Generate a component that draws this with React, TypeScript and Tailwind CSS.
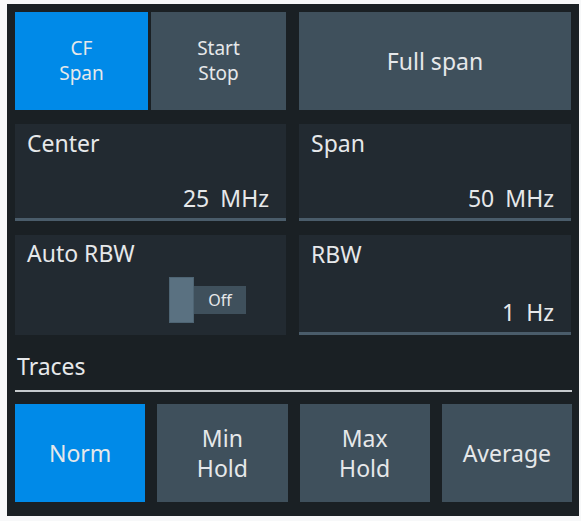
import React from "react";

const font = { fontFamily: '"Noto Sans", "Open Sans", sans-serif' };

function Field({ label, value, unit, children }: { label: string; value?: string; unit?: string; children?: React.ReactNode }) {
  return (
    <div className="bg-[#222a31] border-b-[3px] border-[#4a5c6a] flex flex-col justify-between pl-[12px] pr-[17px] pt-[4px] pb-[5px]">
      <div className="text-[23px] leading-[30px] text-[#e6e8ea]">{label}</div>
      {children}
      {value !== undefined && (
        <div className="flex justify-end gap-[11px] text-[23px] leading-[30px] text-[#e6e8ea]">
          <span>{value}</span>
          <span>{unit}</span>
        </div>
      )}
    </div>
  );
}

function Btn({ active, lines, small }: { active?: boolean; lines: string[]; small?: boolean }) {
  return (
    <div
      className={`${active ? "bg-[#008ae8]" : "bg-[#3f505c]"} flex flex-col items-center justify-center text-[#e6e8ea] ${
        small ? "text-[19px] leading-[25px]" : "text-[23px] leading-[30px]"
      }`}
    >
      {lines.map((l) => (
        <span key={l}>{l}</span>
      ))}
    </div>
  );
}

export default function App() {
  return (
    <div className="w-[581px] h-[521px] bg-[#f7f8f9] pt-[4px] pl-[7px]" style={font}>
      <div className="w-[572px] h-[512px] bg-[#1a2024] pt-[8px] pl-[8px] pr-[7px] flex flex-col">
        <div className="grid grid-cols-[271px_272px] grid-rows-[98px_97px_100px] gap-x-[13px] gap-y-[14px]">
          <div className="grid grid-cols-[133px_135px] gap-[3px]">
            <Btn active small lines={["CF", "Span"]} />
            <Btn small lines={["Start", "Stop"]} />
          </div>
          <Btn lines={["Full span"]} />
          <Field label="Center" value="25" unit="MHz" />
          <Field label="Span" value="50" unit="MHz" />
          <div className="bg-[#222a31] flex flex-col pl-[12px] pt-[3px]">
            <div className="text-[23px] leading-[30px] text-[#e6e8ea]">Auto RBW</div>
            <div className="flex items-center ml-[142px] mt-[9px]">
              <div className="w-[25px] h-[46px] bg-[#5a7181] border border-[#4e6473]" />
              <div className="w-[52px] h-[28px] bg-[#3f505c] flex items-center justify-center text-[16px] text-[#e6e8ea]">
                Off
              </div>
            </div>
          </div>
          <Field label="RBW" value="1" unit="Hz" />
        </div>
        <div className="mt-[16px] pl-[2px] text-[23px] leading-[30px] text-[#e6e8ea]">Traces</div>
        <div className="mt-[9px] h-[2px] bg-[#c6cacd]" />
        <div className="mt-[12px] grid grid-cols-4 gap-[12px] h-[98px]">
          <Btn active lines={["Norm"]} />
          <Btn lines={["Min", "Hold"]} />
          <Btn lines={["Max", "Hold"]} />
          <Btn lines={["Average"]} />
        </div>
      </div>
    </div>
  );
}
